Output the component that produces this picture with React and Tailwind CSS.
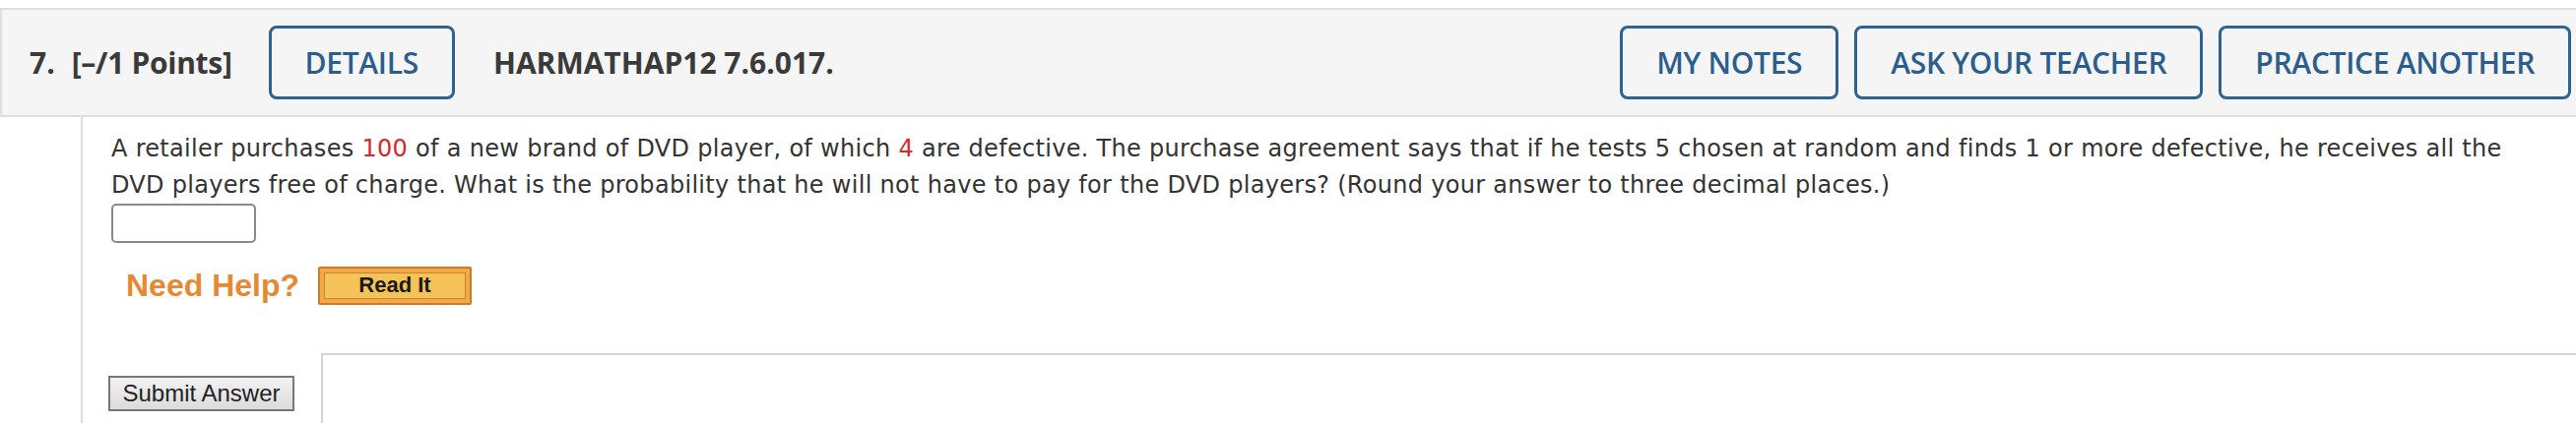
import React from "react";

const HEAD_FONT = { fontFamily: '"Open Sans", "Liberation Sans", sans-serif' };
const BODY_FONT = { fontFamily: '"DejaVu Sans", Verdana, sans-serif' };
const ARIAL = { fontFamily: '"Liberation Sans", Arial, sans-serif' };

function HeadButton({ children, className = "" }) {
  return (
    <button
      className={`h-[75px] px-[34px] border-[3px] border-[#2e6391] rounded-[8px] text-[30px] font-semibold text-[#2b5e8d] tracking-[-0.3px] bg-transparent ${className}`}
      style={HEAD_FONT}
    >
      {children}
    </button>
  );
}

export default function App() {
  return (
    <div className="w-[2616px] h-[430px] overflow-hidden bg-white pt-[8px]">
      {/* Question header */}
      <div
        className="flex items-center h-[111px] bg-[#f5f5f5] border-y-2 border-l-2 border-[#dedede] pl-[28px] pr-[5px] text-[#3a3a3a] text-[30px] font-bold"
        style={HEAD_FONT}
      >
        <span>7.</span>
        <span className="ml-[17px] tracking-[-0.3px]">[–/1 Points]</span>
        <HeadButton className="ml-[37px] px-[33px]">DETAILS</HeadButton>
        <span className="ml-[39px]">HARMATHAP12 7.6.017.</span>
        <div className="ml-auto flex gap-[16px]">
          <HeadButton>MY NOTES</HeadButton>
          <HeadButton>ASK YOUR TEACHER</HeadButton>
          <HeadButton>PRACTICE ANOTHER</HeadButton>
        </div>
      </div>

      {/* Question body */}
      <div className="ml-[82px] border-l-2 border-[#dddddd] pl-[29px] h-[320px]">
        <p
          className="pt-[14px] text-[24px] leading-[37px] tracking-[0.3px] text-[#333333] max-w-[2465px]"
          style={BODY_FONT}
        >
          A retailer purchases <span className="text-[#d42a2a]">100</span> of a new brand of DVD player, of which{" "}
          <span className="text-[#d42a2a]">4</span> are defective. The purchase agreement says that if he tests 5 chosen at
          random and finds 1 or more defective, he receives all the DVD players free of charge. What is the probability
          that he will not have to pay for the DVD players? (Round your answer to three decimal places.)
        </p>
        <input
          type="text"
          className="block w-[147px] h-[40px] border-2 border-[#8a8a8a] rounded-[5px] bg-white"
        />

        <div className="flex items-center mt-[19px] pl-[15px]" style={ARIAL}>
          <span className="text-[32px] font-bold text-[#e58a33]">Need Help?</span>
          <button className="ml-[19px] w-[156px] h-[39px] border-2 border-[#d07a22] bg-[#f0a848] p-[4px] rounded-[2px]">
            <span className="flex items-center justify-center w-full h-full border border-[#c4862e] bg-[#f5c357] text-[22px] font-bold text-[#1a1a1a] leading-none">
              Read It
            </span>
          </button>
        </div>

        <div className="flex items-start mt-[45px]">
          <button
            className="ml-[-3px] mt-[23px] h-[36px] w-[189px] border-2 border-[#777777] bg-gradient-to-b from-[#f2f2f2] to-[#dcdcdc] text-[24px] text-[#222222] leading-none"
            style={ARIAL}
          >
            Submit Answer
          </button>
          <div className="ml-[27px] flex-1 h-[90px] border-t-2 border-l-2 border-[#d4d4d4] bg-white" />
        </div>
      </div>
    </div>
  );
}
